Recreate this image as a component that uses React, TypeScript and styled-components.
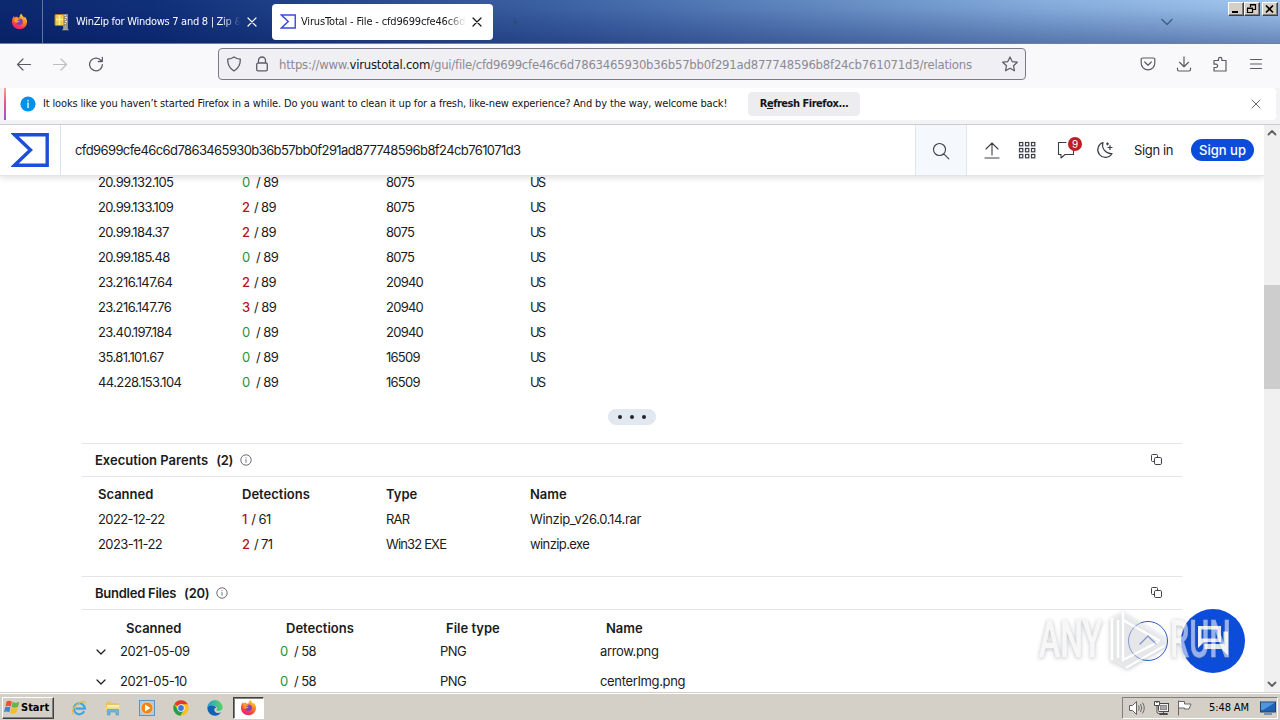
import React from 'react';
import styled, { createGlobalStyle, css } from 'styled-components';

const UI_FONT = '"DejaVu Sans Condensed", "Liberation Sans", sans-serif';
const PAGE_FONT = 'Inter, "Liberation Sans", sans-serif';

const GlobalStyle = createGlobalStyle`
  * { box-sizing: border-box; }
  html, body { margin: 0; padding: 0; overflow: hidden; }
  body { width: 1280px; height: 720px; font-family: ${UI_FONT}; background: #fff; }
  svg { display: block; flex: none; }
`;

const Desktop = styled.div`
  display: flex;
  flex-direction: column;
  width: 1280px;
  height: 720px;
  overflow: hidden;
  background: #fff;
`;

/* ---------- tab strip ---------- */

const TabStrip = styled.div`
  display: flex;
  align-items: center;
  height: 44px;
  flex: none;
  color: #fff;
  border-bottom: 1px solid #6f7f9e;
  background:
    linear-gradient(180deg, rgba(0, 20, 90, 0) 0%, rgba(0, 20, 90, 0.04) 20%, rgba(0, 20, 90, 0.36) 100%),
    linear-gradient(90deg, #0c286e 0%, #10307a 12%, #4065a6 45%, #87aedd 82%, #a2c8ef 100%);
`;

const FirefoxView = styled.div`
  display: flex;
  align-items: center;
  justify-content: center;
  width: 43px;
  height: 43px;
  padding-right: 3px;
  border-right: 1px solid #6474a0;
`;

const Tab = styled.div<{ $active?: boolean }>`
  display: flex;
  align-items: center;
  height: 36px;
  border-radius: 4px;
  font-size: 11px;
  ${(p) =>
    p.$active
      ? css`
          width: 221px;
          margin-left: 4px;
          padding-left: 8px;
          background: #fff;
          color: #15141a;
        `
      : css`
          width: 225px;
          padding-left: 11px;
          color: #fbfbfe;
        `}
`;

const TabTitle = styled.div<{ $track: number }>`
  width: 165px;
  margin: 0 3px 0 5px;
  white-space: nowrap;
  overflow: hidden;
  letter-spacing: ${(p) => p.$track}px;
  mask-image: linear-gradient(90deg, #000 88%, transparent 100%);
`;

const NewTab = styled.div`
  margin-left: 14px;
  color: #2f4a78;
`;

const TabListButton = styled.div`
  margin: 0 53px 0 auto;
  color: #44618f;
`;

const WindowButtons = styled.div`
  display: flex;
  align-self: flex-start;
  padding: 2px 2px 0 0;
`;

const WindowButton = styled.div<{ $gap?: boolean }>`
  display: flex;
  align-items: center;
  justify-content: center;
  width: 16px;
  height: 14px;
  margin-left: ${(p) => (p.$gap ? 2 : 0)}px;
  background: #d4d0c8;
  border: 1px solid;
  border-color: #fff #404040 #404040 #fff;
  box-shadow: inset -1px -1px #808080;
  color: #000;
`;

/* ---------- navigation bar ---------- */

const NavBar = styled.div`
  display: flex;
  align-items: center;
  height: 44px;
  flex: none;
  padding: 0 16px 4px;
  background: #f9f9fb;
  color: #5b5b66;
`;

const NavButtons = styled.div`
  display: flex;
  gap: 20px;
  width: 202px;
`;

const Dim = styled.div`
  color: #bdbdc4;
`;

const UrlBar = styled.div`
  display: flex;
  align-items: center;
  width: 808px;
  height: 32px;
  padding: 0 7px;
  border: 1px solid #7b7b87;
  border-radius: 4px;
  background: #f0f0f4;
`;

const UrlText = styled.div`
  flex: 1;
  margin-left: 9px;
  font-size: 13px;
  letter-spacing: -0.225px;
  white-space: nowrap;
  color: #8a8a92;
  b { font-weight: 400; color: #15141a; }
`;

const Spacer = styled.div<{ $w: number }>`
  width: ${(p) => p.$w}px;
  flex: none;
`;

const ToolButtons = styled.div`
  display: flex;
  gap: 20px;
  margin-left: auto;
`;

/* ---------- notification ---------- */

const NoticeArea = styled.div`
  height: 37px;
  flex: none;
  padding: 0 4px 4px;
  background: #f3f3f5;
  border-bottom: 1px solid #cccccc;
`;

const Notice = styled.div`
  display: flex;
  align-items: center;
  height: 32px;
  border-radius: 0 4px 4px 0;
  overflow: hidden;
  background: #fff;
  color: #15141a;
  font-size: 11px;
  &::before {
    content: '';
    width: 2px;
    height: 32px;
    margin-right: 14px;
    background: linear-gradient(#f9a58c, #f0508c 45%, #9059d0);
  }
`;

const NoticeText = styled.div`
  width: 705px;
  margin-left: 7px;
  padding-bottom: 1px;
  white-space: nowrap;
  letter-spacing: -0.147px;
`;

const NoticeButton = styled.div`
  width: 112px;
  height: 24px;
  line-height: 24px;
  border-radius: 4px;
  background: #ededef;
  text-align: center;
  font-weight: 700;
  letter-spacing: -0.48px;
`;

const NoticeClose = styled.div`
  margin: 0 15px 0 auto;
  color: #6c6c75;
`;

/* ---------- page ---------- */

const Viewport = styled.div`
  display: flex;
  height: 567px;
  flex: none;
  overflow: hidden;
`;

const Page = styled.div`
  position: relative;
  width: 1264px;
  height: 567px;
  overflow: hidden;
  font-family: ${PAGE_FONT};
  font-size: 13px;
  color: #1b1b21;
`;

const SiteHeader = styled.div`
  position: relative;
  z-index: 1;
  display: flex;
  align-items: center;
  height: 51px;
  background: #fff;
  border-bottom: 1px solid #dfe3ea;
  box-shadow: 0 2px 6px rgba(0, 0, 0, 0.12);
`;

const LogoCell = styled.div`
  display: flex;
  align-items: center;
  width: 61px;
  height: 50px;
  padding-left: 11px;
  border-right: 1px solid #dbe3f3;
`;

const Query = styled.div`
  flex: 1;
  padding-left: 14px;
  letter-spacing: -0.6px;
`;

const SearchCell = styled.div`
  display: flex;
  align-items: center;
  justify-content: center;
  width: 52px;
  height: 50px;
  padding: 1px 1px 0 0;
  border: solid #dfe6ee;
  border-width: 0 1px;
  background: #f5f9fe;
  color: #3a3f47;
`;

const HeaderActions = styled.div`
  display: flex;
  align-items: center;
  width: 297px;
  padding-left: 16px;
  color: #3a3f47;
`;

const ActionIcon = styled.div<{ $gap: number }>`
  position: relative;
  margin-right: ${(p) => p.$gap}px;
`;

const Badge = styled.div`
  position: absolute;
  left: 11px;
  top: -4px;
  width: 14px;
  height: 14px;
  border-radius: 7px;
  background: #c01c24;
  color: #fff;
  font-size: 10px;
  line-height: 14px;
  text-align: center;
`;

const SignIn = styled.div`
  width: 57px;
  white-space: nowrap;
  letter-spacing: -0.35px;
  color: #1b1b21;
`;

const SignUp = styled.div`
  width: 63px;
  height: 22px;
  border-radius: 11px;
  background: #0b4dda;
  color: #fff;
  font-weight: 500;
  line-height: 22px;
  text-align: center;
`;

const Content = styled.div`
  width: 1100px;
  margin: -6px 0 0 82px;
`;

const IpTable = styled.div`
  padding-left: 16px;
`;

const ParentTable = styled.div`
  padding: 5px 0 19px 16px;
`;

const BundleTable = styled.div`
  padding: 10px 0 0 12px;
`;

const TableRow = styled.div<{ $head?: boolean }>`
  display: grid;
  grid-template-columns: repeat(4, 144px);
  align-items: center;
  height: 25px;
  padding-bottom: 1px;
  white-space: nowrap;
  font-weight: ${(p) => (p.$head ? 600 : 400)};
`;

const FileHeadRow = styled(TableRow)`
  grid-template-columns: repeat(4, 160px);
  height: 16px;
  padding-left: 32px;
`;

const FileRow = styled(TableRow)`
  grid-template-columns: 26px repeat(4, 160px);
  height: 30px;
  svg { margin-top: 3px; }
`;

const Cell = styled.div<{ $track?: number }>`
  letter-spacing: ${(p) => p.$track ?? -0.6}px;
`;

const Detection = styled.div<{ $bad?: boolean }>`
  display: flex;
  gap: ${(p) => (p.$bad ? 4.5 : 6.5)}px;
  letter-spacing: -0.6px;
  span {
    color: ${(p) => (p.$bad ? '#b5161d' : '#1f9140')};
    font-weight: ${(p) => (p.$bad ? 500 : 400)};
  }
`;

const MoreRow = styled.div`
  display: flex;
  justify-content: center;
  height: 48px;
  padding-top: 14px;
`;

const MorePill = styled.div`
  display: flex;
  align-items: center;
  justify-content: center;
  gap: 8px;
  width: 48px;
  height: 16px;
  border-radius: 8px;
  background: #e1e8f0;
`;

const Dot = styled.i`
  width: 4px;
  height: 4px;
  border-radius: 2px;
  background: #20242c;
`;

const SectionTitle = styled.div<{ $track?: number }>`
  display: flex;
  align-items: center;
  height: 34px;
  padding: 0 19px 1px 13px;
  border: solid #e2e4e7;
  border-width: 1px 0;
  font-weight: 600;
  letter-spacing: ${(p) => p.$track ?? 0}px;
  svg:last-child { margin-left: auto; color: #3f434a; }
`;

const Count = styled.span`
  margin: 0 7px 0 8px;
  letter-spacing: -0.3px;
`;

const BackToTop = styled.div`
  position: absolute;
  left: 1128px;
  top: 496px;
  width: 40px;
  height: 40px;
  display: flex;
  align-items: center;
  justify-content: center;
  border: 1px solid #2f5cc4;
  border-radius: 50%;
  background: #fff;
  color: #2f5cc4;
`;

const ChatButton = styled.div`
  position: absolute;
  left: 1181px;
  top: 484px;
  width: 64px;
  height: 64px;
  display: flex;
  align-items: center;
  justify-content: center;
  border-radius: 50%;
  background: #0b4dda;
`;

const Watermark = styled.div`
  position: absolute;
  left: 1034px;
  top: 481px;
  opacity: 0.6;
  filter: drop-shadow(0 1px 2px rgba(70, 75, 85, 0.6));
`;

const Scrollbar = styled.div`
  display: flex;
  flex-direction: column;
  align-items: center;
  justify-content: space-between;
  width: 16px;
  height: 567px;
  padding: 3px 0;
  background: #f0f0f0;
  color: #606060;
`;

const Thumb = styled.div`
  width: 16px;
  height: 104px;
  margin-top: -143px;
  background: #cdcdcd;
`;

/* ---------- taskbar ---------- */

const Taskbar = styled.div`
  display: flex;
  align-items: center;
  height: 28px;
  flex: none;
  padding: 2px 2px 0;
  border-top: 1px solid #d4d0c8;
  box-shadow: inset 0 1px #fff;
  background: #d4d0c8;
  font-size: 11px;
  color: #000;
`;

const StartButton = styled.div`
  display: flex;
  align-items: center;
  gap: 1px;
  width: 52px;
  height: 22px;
  padding: 0 0 1px 1px;
  border: 1px solid;
  border-color: #fff #404040 #404040 #fff;
  box-shadow: inset -1px -1px #808080;
  font-weight: 700;
`;

const QuickLaunch = styled.div`
  display: flex;
  gap: 18px;
  margin-left: 17px;
`;

const TaskButton = styled.div`
  display: flex;
  align-items: center;
  justify-content: center;
  width: 31px;
  height: 22px;
  margin-left: 10px;
  border: 1px solid;
  border-color: #404040 #fff #fff #404040;
  box-shadow: inset 1px 1px #808080;
  background: #fff;
`;

const Tray = styled.div`
  display: flex;
  align-items: center;
  width: 156px;
  height: 22px;
  margin-left: auto;
  padding-left: 5px;
  border: 1px solid;
  border-color: #808080 #fff #fff #808080;
`;

const Clock = styled.div`
  width: 51px;
  margin-left: 16px;
  padding-bottom: 1px;
  letter-spacing: -0.1px;
`;

/* ---------- icons ---------- */

type LineProps = { d: string; size?: number; w?: number };

const Line = ({ d, size = 16, w = 1.2 }: LineProps) => (
  <svg width={size} height={size} viewBox={`0 0 ${size} ${size}`} fill="none" stroke="currentColor" strokeWidth={w} strokeLinecap="round" strokeLinejoin="round">
    <path d={d} />
  </svg>
);

const CLOSE = 'M4 4l8 8M12 4l-8 8';

const FirefoxIcon = () => (
  <svg width="17" height="17" viewBox="0 0 18 18">
    <defs>
      <linearGradient id="ffBody" x1="0.8" y1="0" x2="0.3" y2="1">
        <stop offset="0" stopColor="#ffe14a" />
        <stop offset="0.4" stopColor="#ff8a1e" />
        <stop offset="0.8" stopColor="#f7344f" />
        <stop offset="1" stopColor="#e0208a" />
      </linearGradient>
    </defs>
    <path d="M1 9.6C.8 7 2 4.600 3.300 3.300L3.700 5C4.600 4 5.700 3.800 6.600 4.200 7 5 8 5.300 9.200 4.300 8.900 2.800 10 1.200 11.200.8c0 1.500 2 2.600 2.700 4.300.5-.3.600-.8.500-1.300C16.300 5.600 17 7.700 17 9.600a8 7.600 0 0 1-16 0z" fill="url(#ffBody)" />
    <circle cx="8.900" cy="9.200" r="3.500" fill="#7a3fc0" />
    <path d="M3.500 5.500C6 4.500 8.500 5.500 9.500 7.200c-1.800-.4-2.600.3-2.900 1 1.200 0 2.500.4 2.900.9-1.600.2-2.500 1.600-4.500 1.200C3.500 9.500 3 7 3.500 5.500z" fill="#ff9a22" />
  </svg>
);

const WinZipIcon = () => (
  <svg width="17" height="18" viewBox="0 0 17 18">
    <path d="M9 1h5v14H9z" fill="#8f8f88" />
    <path d="M10 2h2v1h-2zm1 2h2v1h-2zm-1 2h2v1h-2zm1 2h2v1h-2zm-1 2h2v1h-2z" fill="#e8e8e0" />
    <rect x="1" y="1.500" width="9" height="11" rx="1" fill="#f2c94b" stroke="#a8812a" />
    <path d="M2 6.500h7M5.500 2v10" stroke="#fdeeb0" strokeWidth="1.500" />
    <path d="M11.500 12v2m-2 2.500l2-2.500 2 2.500z" stroke="#a9a9a4" fill="none" strokeWidth="1.500" />
  </svg>
);

const VtLogo = ({ w, h, color, stroke }: { w: number; h: number; color: string; stroke: number }) => (
  <svg width={w} height={h} viewBox="0 0 38 34" fill="none">
    <path d="M3.500 1.700H36.200V32.300H3.500L19.500 17z" stroke={color} strokeWidth={stroke} strokeMiterlimit="6" />
  </svg>
);

const InfoBadge = () => (
  <svg width="16" height="16" viewBox="0 0 16 16">
    <circle cx="8" cy="8" r="7.600" fill="#0090ed" />
    <rect x="7.400" y="6.500" width="1.300" height="5.500" fill="#fff" />
    <rect x="7.400" y="3.900" width="1.300" height="1.500" fill="#fff" />
  </svg>
);

const InfoIcon = () => (
  <svg width="12" height="12" viewBox="0 0 12 12" fill="none" stroke="#5a5e66">
    <circle cx="6" cy="6" r="5.200" strokeWidth="0.900" />
    <path d="M6 5.200v3.500M6 3.200v1" strokeWidth="0.900" />
  </svg>
);

const CopyIcon = () => (
  <svg width="13" height="13" viewBox="0 0 13 13" fill="none" stroke="currentColor">
    <rect x="4.500" y="4.500" width="7" height="7" rx="1.300" />
    <path d="M4.500 8.500h-2a1 1 0 0 1-1-1v-5a1 1 0 0 1 1-1h4a1 1 0 0 1 1 1v2" />
  </svg>
);

const GridIcon = () => (
  <svg width="18" height="18" viewBox="0 0 18 18" fill="none" stroke="currentColor" strokeWidth="1.200">
    {[1, 7, 13].map((y) => [1, 7, 13].map((x) => <rect key={`${x}-${y}`} x={x + 0.5} y={y + 0.5} width="3.300" height="3.300" />))}
  </svg>
);

const ChatIcon = () => (
  <svg width="34" height="34" viewBox="0 0 34 34" fill="#f4f7fd">
    <path fillRule="evenodd" d="M2 2h23v16H8l-6 6zM5.500 5.500v9H21.500v-9z" />
    <path d="M27.500 7.500H32v24l-6.500-6.500H8.500v-5h19z" />
  </svg>
);

const AnyRunMark = () => (
  <svg width="202" height="66" viewBox="0 0 202 66">
    <g fill="#f2f3f5" stroke="#f2f3f5" strokeWidth="0.600" fontFamily="Roboto, sans-serif" fontWeight="500" fontSize="51">
      <text x="5" y="51" textLength="63" lengthAdjust="spacingAndGlyphs">ANY</text>
      <text x="136" y="51" textLength="61" lengthAdjust="spacingAndGlyphs">RUN</text>
    </g>
    <path d="M76 13l13-7 43 26v8L92 62l-16-8z" fill="#e4e6e9" fillOpacity="0.750" />
    <path d="M78 12v42M84 14v38M89 6v48l35-18M89 14l37 21M92 62l38-22" fill="none" stroke="#fff" strokeWidth="2.400" />
  </svg>
);

const WindowsFlag = () => (
  <svg width="16" height="16" viewBox="0 0 16 16">
    <path d="M2.500 2.500Q5 .8 7.800 2.500L6.800 7.500Q4.200 6 1.500 7.500z" fill="#e8552c" />
    <path d="M8.500 2.800Q11.500 4.500 15.200 2.800L14 8Q10.500 9.500 7.500 8z" fill="#6cb33f" />
    <path d="M1.200 8.300Q3.800 7 6.500 8.300L5.300 13.300Q2.800 11.800 0 13.300z" fill="#3d84d6" />
    <path d="M7.200 8.800Q10.200 10.400 13.700 8.800L12.500 13.800Q9 15.500 6 13.800z" fill="#f5bd26" />
  </svg>
);

const IeIcon = () => (
  <svg width="16" height="16" viewBox="0 0 16 16" fill="none">
    <path d="M13.200 11.300A5.500 5.500 0 1 1 13.800 8.600H4.500" stroke="#3fa6df" strokeWidth="2.200" />
    <path d="M2.200 14.200C-.5 12 3.500 5.500 9 2.500c3-1.600 6-1.500 4.800 1.200" stroke="#e5bd45" strokeWidth="1.200" />
  </svg>
);

const FolderIcon = () => (
  <svg width="16" height="16" viewBox="0 0 16 16">
    <path d="M1 3l1-1.500h4L7 3h7v9H1z" fill="#e6c565" />
    <path d="M2 5h12v6H2z" fill="#fbeeb2" />
    <path d="M1 7h14v3H1z" fill="#f3dc86" />
    <path d="M2.500 15V9.500h11V15H11v-3H5v3z" fill="#6fb8dc" stroke="#4a93bd" strokeWidth="0.600" />
  </svg>
);

const MediaIcon = () => (
  <svg width="16" height="16" viewBox="0 0 16 16">
    <rect x="0.500" y="0.500" width="15" height="15" fill="#a9cdec" stroke="#5b93c4" />
    <circle cx="8" cy="8" r="6" fill="#f08418" stroke="#fbd9a8" strokeWidth="0.700" />
    <path d="M6 4.500L11.500 8 6 11.500z" fill="#fff" />
  </svg>
);

const ChromeIcon = () => (
  <svg width="16" height="16" viewBox="0 0 16 16">
    <circle cx="8" cy="8" r="7.700" fill="#fbc116" />
    <path d="M8 8L1.300 4.200A7.700 7.700 0 0 1 14.700 4.300H8z" fill="#df3b2f" />
    <path d="M1.300 4.200A7.700 7.700 0 0 0 7.300 15.700L11 10 8 8 4.800 9.800z" fill="#2a9d4d" />
    <circle cx="8" cy="8" r="3.700" fill="#fff" />
    <circle cx="8" cy="8" r="2.900" fill="#3a78e8" />
  </svg>
);

const EdgeIcon = () => (
  <svg width="16" height="16" viewBox="0 0 16 16">
    <defs>
      <linearGradient id="edgeTop" x1="0" y1="0.500" x2="1" y2="0.400">
        <stop offset="0" stopColor="#1e9fe0" />
        <stop offset="1" stopColor="#5fd45c" />
      </linearGradient>
    </defs>
    <path d="M.3 8A7.700 7.700 0 0 1 15.700 7.500c0 2.500-2 3.500-4 3.500-1.800 0-2.500-.8-2-1.600C10.500 7.500 9 5.500 6 5.500 3 5.500.8 7 .3 8z" fill="url(#edgeTop)" />
    <path d="M.3 8C.8 6.300 3 5.300 5.500 5.500 7.500 5.600 9 6.500 9 8 7.800 7.700 6.800 9 7.500 10.700c1 2.300 4 3 6.500 1.500C12.500 14.800 10 15.800 8 15.700A7.700 7.700 0 0 1 .3 8z" fill="#1460b4" />
  </svg>
);

const SpeakerIcon = () => (
  <svg width="18" height="16" viewBox="0 0 18 16" fill="none" stroke="#606060">
    <path d="M1.500 5.500h3l4-4v13l-4-4h-3z" fill="#fff" />
    <path d="M10.500 5.500q1.500 2.500 0 5M12.500 4q2.500 4 0 8M14.500 2.500q3.500 5.500 0 11" strokeWidth="0.900" />
  </svg>
);

const NetworkIcon = () => (
  <svg width="17" height="16" viewBox="0 0 17 16" fill="none" stroke="#4a4a4a">
    <rect x="5.500" y="3.500" width="10" height="8" fill="#f2f2f0" />
    <rect x="7.500" y="5.500" width="6" height="4" fill="#a9a9a9" stroke="#8a8a8a" />
    <path d="M6.500 14.500v-1h8v1zM10.500 11.500v2" fill="#fff" />
    <path d="M1.500 1.500v4h5v-4zM4 5.500V12q0 1.500 2 1.500" fill="#fff" />
    <path d="M3.500 1v2M4.700 1v2" strokeWidth="0.800" />
  </svg>
);

const FlagIcon = () => (
  <svg width="17" height="16" viewBox="0 0 17 16" fill="#fff" stroke="#666">
    <path d="M2.500 15.500V.5M2.500 1.500h6V4h6.500l-2 5H8.500V8h-6" />
  </svg>
);

const MonitorIcon = () => (
  <svg width="16" height="14" viewBox="0 0 16 14">
    <rect x="0.500" y="1" width="15" height="10" fill="#1f62b4" stroke="#1b4474" />
    <path d="M1 1.500h14L3 9H1z" fill="#4d97e0" />
    <path d="M4 13h8" stroke="#5b7ea6" strokeWidth="1.500" />
  </svg>
);

/* ---------- data ---------- */

type Score = [number, number];

const contactedIps: [string, Score, string, string][] = [
  ['20.99.132.105', [0, 89], '8075', 'US'],
  ['20.99.133.109', [2, 89], '8075', 'US'],
  ['20.99.184.37', [2, 89], '8075', 'US'],
  ['20.99.185.48', [0, 89], '8075', 'US'],
  ['23.216.147.64', [2, 89], '20940', 'US'],
  ['23.216.147.76', [3, 89], '20940', 'US'],
  ['23.40.197.184', [0, 89], '20940', 'US'],
  ['35.81.101.67', [0, 89], '16509', 'US'],
  ['44.228.153.104', [0, 89], '16509', 'US'],
];

const parents: [string, Score, string, string][] = [
  ['2022-12-22', [1, 61], 'RAR', 'Winzip_v26.0.14.rar'],
  ['2023-11-22', [2, 71], 'Win32 EXE', 'winzip.exe'],
];

const bundled: [string, Score, string, string][] = [
  ['2021-05-09', [0, 58], 'PNG', 'arrow.png'],
  ['2021-05-10', [0, 58], 'PNG', 'centerImg.png'],
];

const ScoreCell = ({ score: [n, total] }: { score: Score }) => (
  <Detection $bad={n > 0}>
    <span>{n}</span>/ {total}
  </Detection>
);

export default function App() {
  return (
    <Desktop>
      <GlobalStyle />
      <TabStrip>
        <FirefoxView>
          <FirefoxIcon />
        </FirefoxView>
        <Tab>
          <WinZipIcon />
          <TabTitle $track={-0.28}>WinZip for Windows 7 and 8 | Zip &amp; Unzip</TabTitle>
          <Line d={CLOSE} w={1.2} />
        </Tab>
        <Tab $active>
          <VtLogo w={16} h={15} color="#3a4be0" stroke={3.4} />
          <TabTitle $track={-0.16}>VirusTotal - File - cfd9699cfe46c6d7863</TabTitle>
          <Line d={CLOSE} w={1.2} />
        </Tab>
        <NewTab>
          <Line d="M4.500 8h7M8 4.500v7" size={16} w={1.2} />
        </NewTab>
        <TabListButton>
          <Line d="M3 5.500l5 5 5-5" w={1.5} />
        </TabListButton>
        <WindowButtons>
          <WindowButton>
            <svg width="12" height="10">
              <path d="M2 8h6" stroke="#000" strokeWidth="2" />
            </svg>
          </WindowButton>
          <WindowButton>
            <svg width="12" height="10" fill="none" stroke="#000">
              <path d="M4.500 3V.5h5v5H7M4 1h6M1.500 4.500h5v4h-5zM1 4h6" strokeWidth="1.200" />
            </svg>
          </WindowButton>
          <WindowButton $gap>
            <svg width="12" height="10">
              <path d="M2 1.500l7 7M9 1.500l-7 7" stroke="#000" strokeWidth="1.700" />
            </svg>
          </WindowButton>
        </WindowButtons>
      </TabStrip>

      <NavBar>
        <NavButtons>
          <Line d="M1.500 8.500h13M7 3L1.500 8.500 7 14" w={1.2} />
          <Dim>
            <Line d="M1.500 8.500h13M9 3l5.500 5.500L9 14" w={1.2} />
          </Dim>
          <Line d="M13.500 5.200A6.400 6.400 0 1 0 14.400 8.600M14.300 1.500v4h-4" w={1.3} />
        </NavButtons>
        <UrlBar>
          <Line d="M8 .9c2 1.500 4 2 6.300 2.200C14.500 8.500 12.500 12.500 8 15 3.500 12.500 1.500 8.500 1.700 3.100 4 2.900 6 2.400 8 .9z" w={1.3} />
          <Spacer $w={12} />
          <Line d="M4.500 7V4.500a3.500 3.500 0 0 1 7 0V7M4 7h8a1.300 1.300 0 0 1 1.300 1.300v5.200a1.300 1.300 0 0 1-1.300 1.300H4a1.300 1.300 0 0 1-1.300-1.300V8.300A1.300 1.300 0 0 1 4 7z" w={1.3} />
          <UrlText>
            https://www.<b>virustotal.com</b>/gui/file/cfd9699cfe46c6d7863465930b36b57bb0f291ad877748596b8f24cb761071d3/relations
          </UrlText>
          <Line d="M8 .9l2.200 4.700 5.100.6-3.800 3.500 1 5.100L8 12.300l-4.500 2.500 1-5.100L.7 6.200l5.100-.6z" w={1.2} />
        </UrlBar>
        <ToolButtons>
          <Line d="M2.500 2h11a1.300 1.300 0 0 1 1.300 1.300V7a6.800 6.800 0 0 1-13.600 0V3.300A1.300 1.300 0 0 1 2.500 2zM4.700 6L8 9.200 11.300 6" w={1.2} />
          <Line d="M8 .8v9.700M3.500 6.300L8 10.700l4.500-4.400M1.500 12v1.500A1.500 1.500 0 0 0 3 15h10a1.500 1.500 0 0 0 1.500-1.500V12" w={1.2} />
          <Line d="M2 4.500h4.500V3a1.700 1.700 0 0 1 3.400 0v1.500H14V15H2v-3.500h2a1.600 1.600 0 0 0 0-3.300H2z" w={1.2} />
          <Line d="M2.500 3.500h11M2.500 8h11M2.500 12.500h11" w={1.2} />
        </ToolButtons>
      </NavBar>

      <NoticeArea>
        <Notice>
          <InfoBadge />
          <NoticeText>
            It looks like you haven’t started Firefox in a while. Do you want to clean it up for a fresh, like-new experience? And by the way, welcome back!
          </NoticeText>
          <NoticeButton>
            R<u>e</u>fresh Firefox...
          </NoticeButton>
          <NoticeClose>
            <Line d="M1 1l8 8M9 1l-8 8" size={10} w={1} />
          </NoticeClose>
        </Notice>
      </NoticeArea>

      <Viewport>
        <Page>
          <SiteHeader>
            <LogoCell>
              <VtLogo w={38} h={34} color="#1a4fd6" stroke={3.4} />
            </LogoCell>
            <Query>cfd9699cfe46c6d7863465930b36b57bb0f291ad877748596b8f24cb761071d3</Query>
            <SearchCell>
              <Line d="M7.500 1.500a6 6 0 1 1 0 12 6 6 0 0 1 0-12zM11.800 11.800L16.800 16.800" size={18} w={1.1} />
            </SearchCell>
            <HeaderActions>
              <ActionIcon $gap={17}>
                <Line d="M9 14V2M3 8l6-6 6 6M2 17h14" size={18} w={1.1} />
              </ActionIcon>
              <ActionIcon $gap={21}>
                <GridIcon />
              </ActionIcon>
              <ActionIcon $gap={21}>
                <Line d="M9 1.500H1.500v12H4V17l4-3.500h8.500V8" size={18} w={1.1} />
                <Badge>9</Badge>
              </ActionIcon>
              <ActionIcon $gap={20}>
                <Line d="M7 1.500A7.600 7.600 0 1 0 16 12.500 8.500 8.500 0 0 1 7 1.500zM14 4.500v4M12 6.500h4M11.500 1.800v2M10.500 2.800h2" size={18} w={1.2} />
              </ActionIcon>
              <SignIn>Sign in</SignIn>
              <SignUp>Sign up</SignUp>
            </HeaderActions>
          </SiteHeader>

          <Content>
            <IpTable>
              {contactedIps.map(([ip, score, as, country]) => (
                <TableRow key={ip}>
                  <Cell>{ip}</Cell>
                  <ScoreCell score={score} />
                  <Cell $track={-0.75}>{as}</Cell>
                  <Cell $track={-1.8}>{country}</Cell>
                </TableRow>
              ))}
            </IpTable>
            <MoreRow>
              <MorePill>
                <Dot />
                <Dot />
                <Dot />
              </MorePill>
            </MoreRow>

            <SectionTitle>
              Execution Parents <Count>(2)</Count>
              <InfoIcon />
              <CopyIcon />
            </SectionTitle>
            <ParentTable>
              <TableRow $head>
                <span>Scanned</span>
                <span>Detections</span>
                <span>Type</span>
                <span>Name</span>
              </TableRow>
              {parents.map(([date, score, type, name], i) => (
                <TableRow key={name}>
                  <Cell>{date}</Cell>
                  <ScoreCell score={score} />
                  <Cell $track={-0.85}>{type}</Cell>
                  <Cell $track={i ? -0.6 : -0.35}>{name}</Cell>
                </TableRow>
              ))}
            </ParentTable>

            <SectionTitle $track={-0.25}>
              Bundled Files <Count>(20)</Count>
              <InfoIcon />
              <CopyIcon />
            </SectionTitle>
            <BundleTable>
              <FileHeadRow $head>
                <span>Scanned</span>
                <span>Detections</span>
                <span>File type</span>
                <span>Name</span>
              </FileHeadRow>
              {bundled.map(([date, score, type, name]) => (
                <FileRow key={name}>
                  <Line d="M3 5l4 4 4-4" size={14} w={1.2} />
                  <Cell $track={-0.4}>{date}</Cell>
                  <ScoreCell score={score} />
                  <Cell>{type}</Cell>
                  <Cell $track={-0.35}>{name}</Cell>
                </FileRow>
              ))}
            </BundleTable>
          </Content>

          <BackToTop>
            <Line d="M2 13l8-8 8 8" size={20} w={1.3} />
          </BackToTop>
          <ChatButton>
            <ChatIcon />
          </ChatButton>
          <Watermark>
            <AnyRunMark />
          </Watermark>
        </Page>
        <Scrollbar>
          <Line d="M1.500 6.500L5 3l3.500 3.500" size={10} w={1.8} />
          <Thumb />
          <Line d="M1.500 3.500L5 7l3.500-3.500" size={10} w={1.8} />
        </Scrollbar>
      </Viewport>

      <Taskbar>
        <StartButton>
          <WindowsFlag />
          Start
        </StartButton>
        <QuickLaunch>
          <IeIcon />
          <FolderIcon />
          <MediaIcon />
          <ChromeIcon />
          <EdgeIcon />
        </QuickLaunch>
        <TaskButton>
          <FirefoxIcon />
        </TaskButton>
        <Tray>
          <SpeakerIcon />
          <Spacer $w={7} />
          <NetworkIcon />
          <Spacer $w={6} />
          <FlagIcon />
          <Clock>5:48 AM</Clock>
          <MonitorIcon />
        </Tray>
      </Taskbar>
    </Desktop>
  );
}
